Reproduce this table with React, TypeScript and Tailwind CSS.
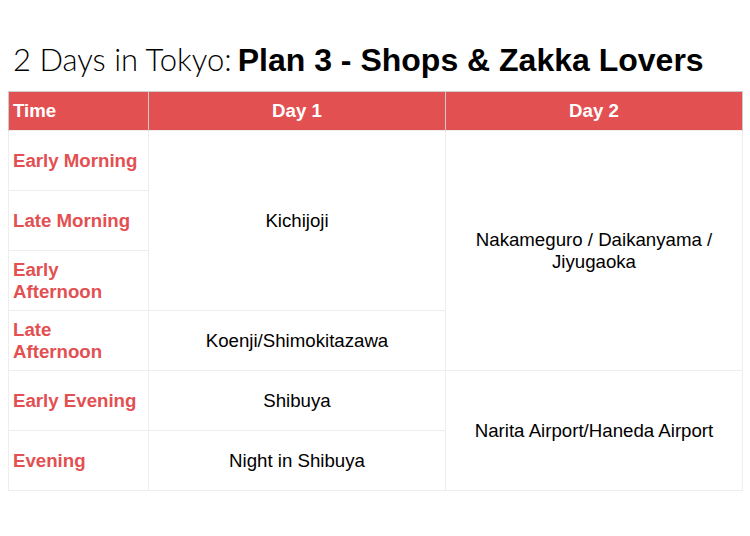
export default function App() {
  const red = "text-[#e35052]";
  const timeCell = `border border-[#eeeeee] px-1 py-0 h-[60px] align-middle text-left font-bold text-[18.67px] leading-[22px] ${red}`;
  const dayCell = "border border-[#eeeeee] px-1 align-middle text-center text-[18.67px] leading-[22px] text-black";

  return (
    <div className="w-[750px] h-[536px] bg-white" style={{ fontFamily: '"Liberation Sans", Arial, sans-serif' }}>
      <h1 className="pt-[36px] pl-[13px] h-[91px] text-black leading-[46px] whitespace-nowrap">
        <span className="text-[31px] font-light" style={{ fontFamily: "Lato, sans-serif" }}>2 Days in Tokyo:</span>
        <span className="ml-[6px] text-[32px] font-bold">Plan 3 - Shops &amp; Zakka Lovers</span>
      </h1>
      <table className="ml-2 w-[734px] border-collapse table-fixed">
        <colgroup>
          <col className="w-[140px]" />
          <col className="w-[297px]" />
          <col className="w-[297px]" />
        </colgroup>
        <thead>
          <tr className="bg-[#e35052] text-white text-[18.67px] font-bold h-[39px]">
            <th className="border border-[#cccccc] border-b-0 px-1 text-left">Time</th>
            <th className="border border-[#cccccc] border-b-0 px-1 text-center">Day 1</th>
            <th className="border border-[#cccccc] border-b-0 px-1 text-center">Day 2</th>
          </tr>
        </thead>
        <tbody>
          <tr>
            <td className={timeCell}>Early Morning</td>
            <td className={dayCell} rowSpan={3}>Kichijoji</td>
            <td className={dayCell} rowSpan={4}>
              Nakameguro / Daikanyama /<br />Jiyugaoka
            </td>
          </tr>
          <tr>
            <td className={timeCell}>Late Morning</td>
          </tr>
          <tr>
            <td className={timeCell}>Early Afternoon</td>
          </tr>
          <tr>
            <td className={timeCell}>Late Afternoon</td>
            <td className={dayCell}>Koenji/Shimokitazawa</td>
          </tr>
          <tr>
            <td className={timeCell}>Early Evening</td>
            <td className={dayCell}>Shibuya</td>
            <td className={dayCell} rowSpan={2}>Narita Airport/Haneda Airport</td>
          </tr>
          <tr>
            <td className={timeCell}>Evening</td>
            <td className={dayCell}>Night in Shibuya</td>
          </tr>
        </tbody>
      </table>
    </div>
  );
}
